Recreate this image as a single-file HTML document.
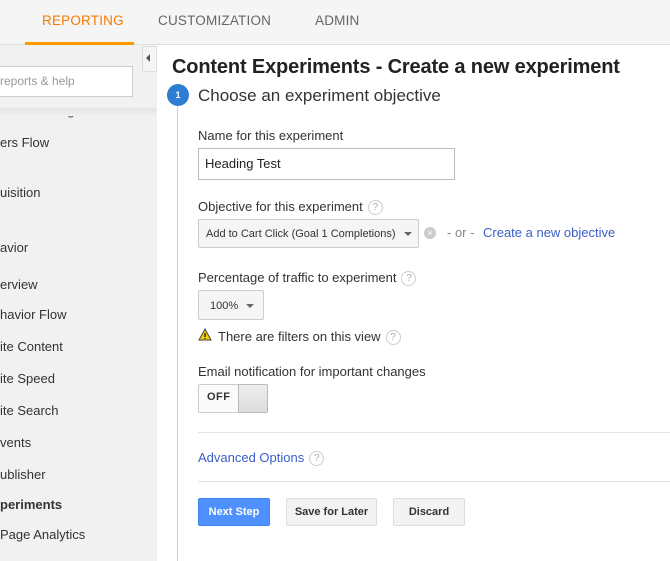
<!DOCTYPE html>
<html><head><style>
*{margin:0;padding:0;box-sizing:border-box}
body{width:670px;height:561px;overflow:hidden;background:#fff;font-family:"Liberation Sans",Arial,sans-serif;position:relative;color:#222}
.a{position:absolute;white-space:nowrap}
.top{position:absolute;left:0;top:0;width:670px;height:45px;background:#f5f5f5;border-bottom:1px solid #e0e0e0}
.tab{position:absolute;top:13px;font-size:13.5px;color:#666;letter-spacing:.2px}
.side{position:absolute;left:0;top:45px;width:157px;height:516px;background:#f1f1f1}
.si{position:absolute;font-size:13px;color:#333;white-space:nowrap}
.lbl{font-size:13px;color:#333}
.q{display:inline-block;width:15px;height:15px;border:1px solid #ccc;border-radius:50%;font-size:10px;color:#aaa;text-align:center;line-height:13px;vertical-align:middle;margin-left:5px}
.btn{position:absolute;height:28px;border:1px solid #ddd;background:#f3f3f3;border-radius:2px;font-size:11px;font-weight:bold;color:#333;text-align:center;line-height:26px}
</style></head><body>
<div class="top">
<div class="tab" style="left:42px;color:#f57c00">REPORTING</div>
<div style="position:absolute;left:25px;top:42px;width:109px;height:3px;background:#f90"></div>
<div class="tab" style="left:158px">CUSTOMIZATION</div>
<div class="tab" style="left:315px">ADMIN</div>
</div>
<div class="side">
<div style="position:absolute;left:-2px;top:21px;width:135px;height:31px;background:#fff;border:1px solid #ccc"></div>
<div class="si" style="left:0;top:29px;color:#999;font-size:12px">reports &amp; help</div>
<div class="si" style="left:0;top:58px;color:#555;clip-path:inset(5px 0 0 0)">enchmarking</div>
<div style="position:absolute;left:0;top:63px;width:157px;height:8px;background:linear-gradient(#e4e4e4,#f1f1f1)"></div>
<div class="si" style="left:0;top:90px">ers Flow</div>
<div class="si" style="left:0;top:140px">uisition</div>
<div class="si" style="left:0;top:195px">avior</div>
<div class="si" style="left:0;top:232px">erview</div>
<div class="si" style="left:0;top:262px">havior Flow</div>
<div class="si" style="left:0;top:294px">ite Content</div>
<div class="si" style="left:0;top:326px">ite Speed</div>
<div class="si" style="left:0;top:358px">ite Search</div>
<div class="si" style="left:0;top:390px">vents</div>
<div class="si" style="left:0;top:422px">ublisher</div>
<div class="si" style="left:0;top:452px;font-weight:bold">periments</div>
<div class="si" style="left:0;top:482px">Page Analytics</div>
</div>
<div style="position:absolute;left:142px;top:46px;width:15px;height:26px;background:#f5f5f5;border:1px solid #ddd"></div>
<div class="a" style="left:146px;top:54px;width:0;height:0;border-top:4px solid transparent;border-bottom:4px solid transparent;border-right:4px solid #555"></div>
<div class="a" style="left:172px;top:56px;font-size:20px;font-weight:bold;color:#222;letter-spacing:-0.15px">Content Experiments - Create a new experiment</div>
<div style="position:absolute;left:177px;top:97px;width:1px;height:464px;background:#ccc"></div>
<div class="a" style="left:167px;top:84px;width:22px;height:22px;border-radius:50%;background:#2d7ed3;color:#fff;font-size:9px;font-weight:bold;text-align:center;line-height:22px">1</div>
<div class="a" style="left:198px;top:86px;font-size:17px;color:#333">Choose an experiment objective</div>
<div class="a lbl" style="left:198px;top:128px">Name for this experiment</div>
<div class="a" style="left:198px;top:148px;width:257px;height:32px;border:1px solid #bbb;font-size:13px;padding:7px 6px;color:#222">Heading Test</div>
<div class="a lbl" style="left:198px;top:199px">Objective for this experiment<span class="q">?</span></div>
<div class="a" style="left:198px;top:219px;width:221px;height:29px;border:1px solid #ccc;border-radius:2px;background:#f5f5f5;font-size:11px;padding:8px 7px;color:#333">Add to Cart Click (Goal 1 Completions)</div>
<div class="a" style="left:404px;top:232px;border-left:4px solid transparent;border-right:4px solid transparent;border-top:4px solid #666"></div>
<div class="a" style="left:424px;top:227px;width:12px;height:12px;border-radius:50%;background:#ccc;color:#fff;font-size:9px;text-align:center;line-height:12px">×</div>
<div class="a" style="left:447px;top:225px;font-size:13px;color:#888">- or -</div>
<div class="a" style="left:483px;top:225px;font-size:13px;color:#3b5fc9">Create a new objective</div>
<div class="a lbl" style="left:198px;top:270px">Percentage of traffic to experiment<span class="q">?</span></div>
<div class="a" style="left:198px;top:290px;width:66px;height:30px;border:1px solid #ccc;border-radius:2px;background:#f5f5f5;font-size:11px;padding:9px 11px;color:#333">100%</div>
<div class="a" style="left:246px;top:304px;border-left:4px solid transparent;border-right:4px solid transparent;border-top:4px solid #666"></div>
<svg class="a" style="left:198px;top:328px" width="14" height="13"><path d="M7 1L13 12H1Z" fill="#f5d000" stroke="#444" stroke-width="1"/><path d="M7 5V9M7 10V11" stroke="#222" stroke-width="1.4"/></svg>
<div class="a lbl" style="left:218px;top:329px">There are filters on this view<span class="q">?</span></div>
<div class="a lbl" style="left:198px;top:364px">Email notification for important changes</div>
<div class="a" style="left:198px;top:384px;width:70px;height:29px;border:1px solid #ccc;border-radius:2px;background:#fafafa"></div>
<div class="a" style="left:207px;top:391px;font-size:11px;font-weight:bold;color:#333;letter-spacing:.5px">OFF</div>
<div class="a" style="left:238px;top:384px;width:30px;height:29px;border:1px solid #bbb;border-radius:2px;background:linear-gradient(#eee,#ddd)"></div>
<div style="position:absolute;left:198px;top:432px;width:472px;height:1px;background:#e5e5e5"></div>
<div class="a" style="left:198px;top:450px;font-size:13px;color:#3b5fc9">Advanced Options<span class="q">?</span></div>
<div style="position:absolute;left:198px;top:481px;width:472px;height:1px;background:#e5e5e5"></div>
<div class="btn" style="left:198px;top:498px;width:72px;background:#4d90fe;border-color:#3f84f0;color:#fff">Next Step</div>
<div class="btn" style="left:286px;top:498px;width:91px">Save for Later</div>
<div class="btn" style="left:393px;top:498px;width:72px">Discard</div>
</body></html>
